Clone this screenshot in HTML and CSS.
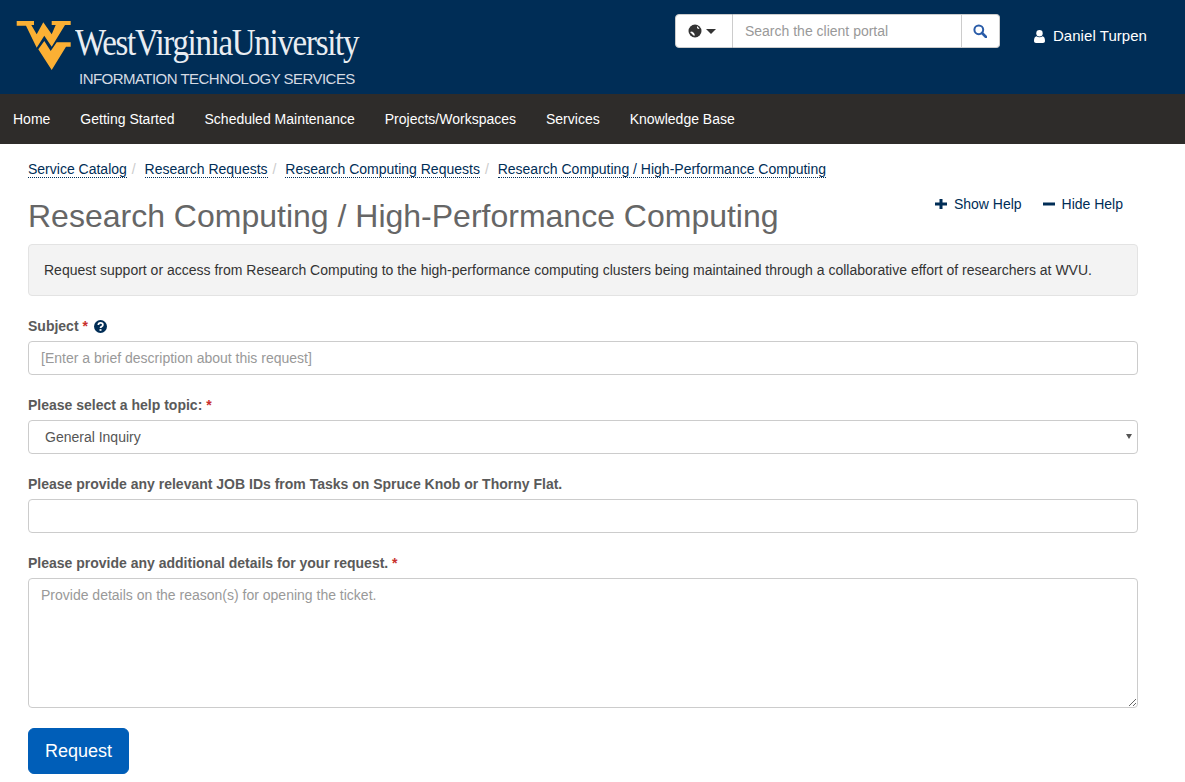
FILE: index.html
```html
<!DOCTYPE html>
<html lang="en">
<head>
    <meta charset="UTF-8">
    <title>Research Computing / High-Performance Computing</title>
    <link rel="stylesheet" href="styles.css">
</head>
<body>
    <header class="top">
        <a class="logo" href="#">
            <svg class="logo-mark" width="56" height="52" viewBox="0 0 56 52">
                <path fill="#fbb034" d="M.7 1H18V5H15.300L20.700 14.300 27.300 2.300 35.700 14.300 39.700 5H35.700V1H54.700V5H49L35.700 26.700 28.300 15.700 20.700 27.700 10 5.700H.7Z"/>
                <path fill="#fbb034" d="M22.300 29.300L28.300 21 34.700 31 40.700 22.300H54.700V26.700H50L35.700 50Z"/>
            </svg>
            <span class="logo-text">
                <span class="logo-name">WestVirginiaUniversity</span>
                <span class="logo-sub">INFORMATION TECHNOLOGY SERVICES</span>
            </span>
        </a>
        <div class="top-right">
            <form class="search">
                <button type="button" class="search-scope">
                    <svg width="14" height="14" viewBox="0 0 14 14">
                        <circle cx="7" cy="7" r="6.500" fill="#333"/>
                        <path fill="#fff" d="M2 8L4 7.500 6 9 7 11.500 5.500 11.500 4 10ZM9 2L11.500 4.500 10 5 9 3.800Z"/>
                    </svg>
                    <svg width="10" height="5" viewBox="0 0 10 5"><path fill="#333" d="M0 0H10L5 5Z"/></svg>
                </button>
                <input class="search-input" type="text" placeholder="Search the client portal">
                <button type="button" class="search-go">
                    <svg width="14" height="14" viewBox="0 0 14 14" fill="none" stroke="#2a5ca8">
                        <circle cx="5.800" cy="5.800" r="4.400" stroke-width="2"/>
                        <path d="M9 9L13 13" stroke-width="2.600" stroke-linecap="round"/>
                    </svg>
                </button>
            </form>
            <a class="user" href="#">
                <svg width="11" height="13" viewBox="0 0 11 13">
                    <circle cx="5.500" cy="3.300" r="3.200" fill="#fff"/>
                    <path fill="#fff" d="M0 11C0 8 1 6.500 2.500 6.300 4 7.500 7 7.500 8.500 6.300 10 6.500 11 8 11 11 11 12.300 10.200 13 9 13H2C.8 13 0 12.300 0 11Z"/>
                </svg>
                Daniel Turpen
            </a>
        </div>
    </header>
    <nav class="menu">
        <a href="#">Home</a>
        <a href="#">Getting Started</a>
        <a href="#">Scheduled Maintenance</a>
        <a href="#">Projects/Workspaces</a>
        <a href="#">Services</a>
        <a href="#">Knowledge Base</a>
    </nav>
    <main class="page">
        <ol class="crumbs">
            <li><a href="#">Service Catalog</a></li>
            <li><a href="#">Research Requests</a></li>
            <li><a href="#">Research Computing Requests</a></li>
            <li><a href="#">Research Computing / High-Performance Computing</a></li>
        </ol>
        <div class="title-row">
            <h1>Research Computing / High-Performance Computing</h1>
            <div class="help-links">
                <a href="#">
                    <svg width="12" height="12" viewBox="0 0 12 12"><path fill="#002d56" d="M4.500 1H7.500V4.500H12V7.500H7.500V11H4.500V7.500H0V4.500H4.500Z"/></svg>
                    Show Help
                </a>
                <a href="#">
                    <svg width="12" height="12" viewBox="0 0 12 12"><path fill="#002d56" d="M0 4.500H12V7.500H0Z"/></svg>
                    Hide Help
                </a>
            </div>
        </div>
        <div class="well">Request support or access from Research Computing to the high-performance computing clusters being maintained through a collaborative effort of researchers at WVU.</div>
        <form>
            <div class="field">
                <label>Subject <span class="req">*</span>
                    <svg class="q-icon" width="13" height="13" viewBox="0 0 12 12">
                        <circle cx="6" cy="6" r="6" fill="#002d56"/>
                        <path d="M4 4.700C4 2 8.200 2.200 8.200 4.500 8.200 6 6 6 6 7.400" fill="none" stroke="#fff" stroke-width="1.600"/>
                        <path d="M5.100 8.400H6.900V10H5.100Z" fill="#fff"/>
                    </svg>
                </label>
                <input class="control" type="text" placeholder="[Enter a brief description about this request]">
            </div>
            <div class="field">
                <label>Please select a help topic: <span class="req">*</span></label>
                <div class="select-wrap">
                    <select class="control select">
                        <option>General Inquiry</option>
                    </select>
                </div>
            </div>
            <div class="field">
                <label>Please provide any relevant JOB IDs from Tasks on Spruce Knob or Thorny Flat.</label>
                <input class="control" type="text">
            </div>
            <div class="field">
                <label>Please provide any additional details for your request. <span class="req">*</span></label>
                <textarea class="control area" placeholder="Provide details on the reason(s) for opening the ticket."></textarea>
            </div>
            <button type="button" class="btn-request">Request</button>
        </form>
    </main>
</body>
</html>
```

FILE: styles.css
```css
* {
    box-sizing: border-box;
}
html, body {
    height: 782px;
    overflow: hidden;
}
body {
    margin: 0;
    background-color: #fff;
    color: #333;
    font-family: "Liberation Sans", Arial, sans-serif;
    font-size: 14px;
    line-height: 20px;
}
a {
    text-decoration: none;
}
.top {
    display: flex;
    justify-content: space-between;
    height: 94px;
    background-color: #002d56;
}
.logo {
    display: flex;
    padding: 20px 0 0 16px;
}
.logo-mark {
    flex: none;
}
.logo-text {
    display: flex;
    flex-direction: column;
    margin-left: 3px;
    color: #e9edf2;
}
.logo-name {
    margin-top: 2px;
    font-family: "Liberation Serif", serif;
    font-size: 38px;
    line-height: 40px;
    letter-spacing: -1.5px;
    white-space: nowrap;
    transform: scaleX(0.868);
    transform-origin: left;
}
.logo-sub {
    margin: 8px 0 0 4px;
    color: #d5dbe3;
    font-size: 15px;
    line-height: 18px;
    letter-spacing: -0.53px;
    white-space: nowrap;
}
.top-right {
    display: flex;
    padding: 14px 38px 0 0;
}
.search {
    display: flex;
    width: 325px;
    height: 34px;
    margin: 0;
}
.search-scope, .search-go {
    display: flex;
    align-items: center;
    justify-content: center;
    border: 1px solid #ccc;
    background-color: #fff;
    padding: 0;
}
.search-scope {
    gap: 4px;
    width: 58px;
    padding-right: 3px;
    border-radius: 4px 0 0 4px;
}
.search-go {
    width: 38px;
    border-left: 0;
    border-radius: 0 4px 4px 0;
}
.search-input {
    flex: 1;
    min-width: 0;
    border: 1px solid #ccc;
    border-left: 0;
    border-radius: 0;
    padding: 6px 12px;
    font: inherit;
    color: #555;
}
.search-input::placeholder, .control::placeholder {
    color: #999;
    opacity: 1;
}
.user {
    display: flex;
    align-items: center;
    gap: 8px;
    height: 20px;
    margin: 12px 0 0 34px;
    color: #fff;
    font-size: 15px;
    letter-spacing: 0.05px;
}
.menu {
    display: flex;
    height: 50px;
    padding-left: 13px;
    background-color: #2e2c2a;
}
.menu a {
    margin-right: 30px;
    color: #fff;
    line-height: 50px;
}
.page {
    width: 1110px;
    margin-left: 28px;
    padding-top: 15px;
}
.crumbs {
    display: flex;
    margin: 0;
    padding: 0;
    list-style: none;
}
.crumbs li + li::before {
    content: "/";
    padding: 0 5px;
    margin-right: 3.9px;
    color: #ccc;
}
.crumbs a {
    color: #002d56;
    border-bottom: 1px dotted #002d56;
}
.title-row {
    display: flex;
    justify-content: space-between;
    align-items: flex-start;
}
h1 {
    margin: 20px 0 10px;
    color: #666;
    font-size: 32px;
    font-weight: 400;
    line-height: 35px;
}
.help-links {
    display: flex;
    gap: 21px;
    margin: 15px 15px 0 0;
}
.help-links a {
    color: #002d56;
}
.help-links svg {
    margin-right: 3px;
    vertical-align: -1px;
}
.well {
    margin-bottom: 20px;
    padding: 15px;
    border: 1px solid #e3e3e3;
    border-radius: 4px;
    background-color: #f3f3f3;
}
.field {
    margin-bottom: 20px;
}
label {
    display: block;
    margin-bottom: 5px;
    color: #5a5a5a;
    font-weight: 700;
}
.req {
    color: #c9302c;
}
.q-icon {
    margin-left: 2px;
    vertical-align: -2px;
}
.control {
    display: block;
    width: 100%;
    height: 34px;
    padding: 6px 12px;
    border: 1px solid #ccc;
    border-radius: 4px;
    background-color: #fff;
    color: #555;
    font: inherit;
}
.select-wrap {
    position: relative;
}
.select {
    appearance: none;
    padding-left: 16px;
}
.select-wrap::after {
    content: "";
    position: absolute;
    top: 14px;
    right: 6px;
    border-style: solid;
    border-width: 5px 3px 0;
    border-color: #555 transparent transparent;
    pointer-events: none;
}
.area {
    height: 130px;
}
.btn-request {
    width: 101px;
    height: 46px;
    border: 1px solid #005eb8;
    border-radius: 6px;
    background-color: #005eb8;
    color: #fff;
    font-family: inherit;
    font-size: 18px;
}
```
